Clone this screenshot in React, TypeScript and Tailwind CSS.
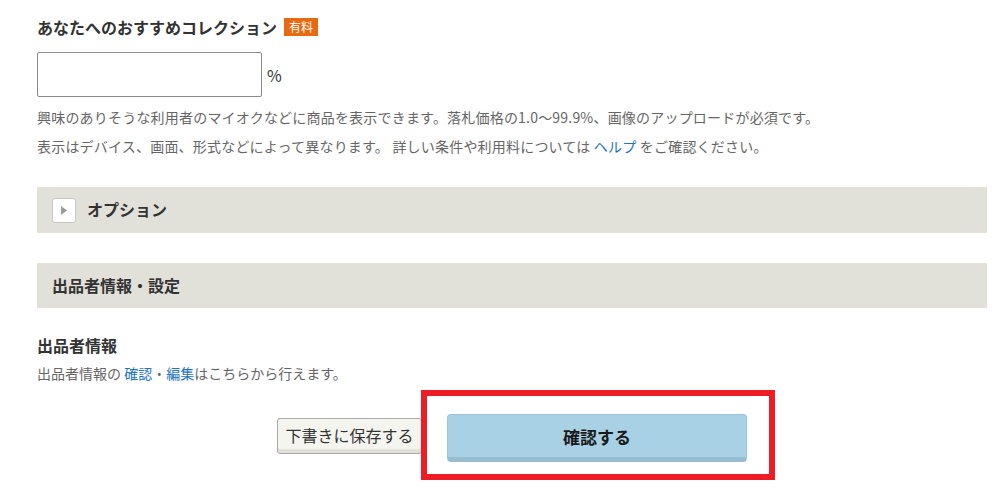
import React from "react";

export default function App() {
  const font = "font-['Noto_Sans_CJK_JP','Noto_Sans',sans-serif]";
  return (
    <div className={`relative w-[995px] h-[489px] overflow-hidden bg-white ${font} text-[#333]`}>
      <div className="pl-[37px] pr-[8px]">
        {/* heading */}
        <div className="pt-[15px] h-[39px] flex items-center gap-[7px]">
          <span className="text-[16px] font-bold leading-[24px] text-[#333]">あなたへのおすすめコレクション</span>
          <span className="inline-flex items-center justify-center w-[34px] h-[18px] bg-[#e8690f] text-white text-[12px] leading-none">有料</span>
        </div>
        {/* input */}
        <div className="mt-[13px] flex items-center">
          <input className="w-[225px] h-[45px] border border-[#8a8a8a] rounded-[2px] outline-none px-2" />
          <span className="ml-[5px] text-[16px] text-[#333]">%</span>
        </div>
        {/* description */}
        <div className="mt-[6px] text-[14px] leading-[29px] text-[#666] tracking-[0.2px]">
          <p>興味のありそうな利用者のマイオクなどに商品を表示できます。落札価格の1.0～99.9%、画像のアップロードが必須です。</p>
          <p>
            表示はデバイス、画面、形式などによって異なります。 詳しい条件や利用料については{" "}
            <a className="text-[#1f73c0]">ヘルプ</a> をご確認ください。
          </p>
        </div>
        {/* option bar */}
        <div className="mt-[26px] h-[46px] bg-[#e1e0d9] flex items-center pl-[15px] gap-[11px]">
          <div className="w-[24px] h-[25px] bg-white border border-[#c9c8c0] rounded-[3px] flex items-center justify-center">
            <svg width="6" height="9" viewBox="0 0 6 9">
              <polygon points="0,0 6,4.5 0,9" fill="#9a9a9a" />
            </svg>
          </div>
          <span className="text-[16px] font-bold text-[#333] leading-[24px] -mt-[3px]">オプション</span>
        </div>
        {/* seller bar */}
        <div className="mt-[30px] h-[45px] bg-[#e1e0d9] flex items-center pl-[15px]">
          <span className="text-[16px] font-bold text-[#333] leading-[24px] -mt-[1px]">出品者情報・設定</span>
        </div>
        {/* seller info */}
        <div className="mt-[25px] text-[16px] font-bold leading-[24px] text-[#333]">出品者情報</div>
        <div className="mt-[6px] text-[14px] leading-[20px] text-[#666]">
          出品者情報の <a className="text-[#1f73c0]">確認</a>・<a className="text-[#1f73c0]">編集</a>はこちらから行えます。
        </div>
        {/* buttons */}
        <div className="mt-[31px] flex justify-center items-start gap-[25px]">
          <button className="mt-[4px] w-[145px] h-[36px] bg-[#f5f5f0] border border-[#a8a8a8] rounded-[3px] shadow-[inset_0_-4px_0_#e0dfd8] text-[16px] text-[#333] leading-none pb-[3px] whitespace-nowrap">
            下書きに保存する
          </button>
          <button className="w-[300px] h-[48px] bg-[#a9d1e5] border border-[#9cc4d8] border-b-[5px] border-b-[#96bdd1] rounded-[4px] text-[17px] font-bold text-[#1a1a1a] leading-none">
            確認する
          </button>
        </div>
      </div>
      {/* red annotation box */}
      <div className="absolute left-[421px] top-[390px] w-[354px] h-[90px] border-[6px] border-[#ee1c25] pointer-events-none" />
    </div>
  );
}
